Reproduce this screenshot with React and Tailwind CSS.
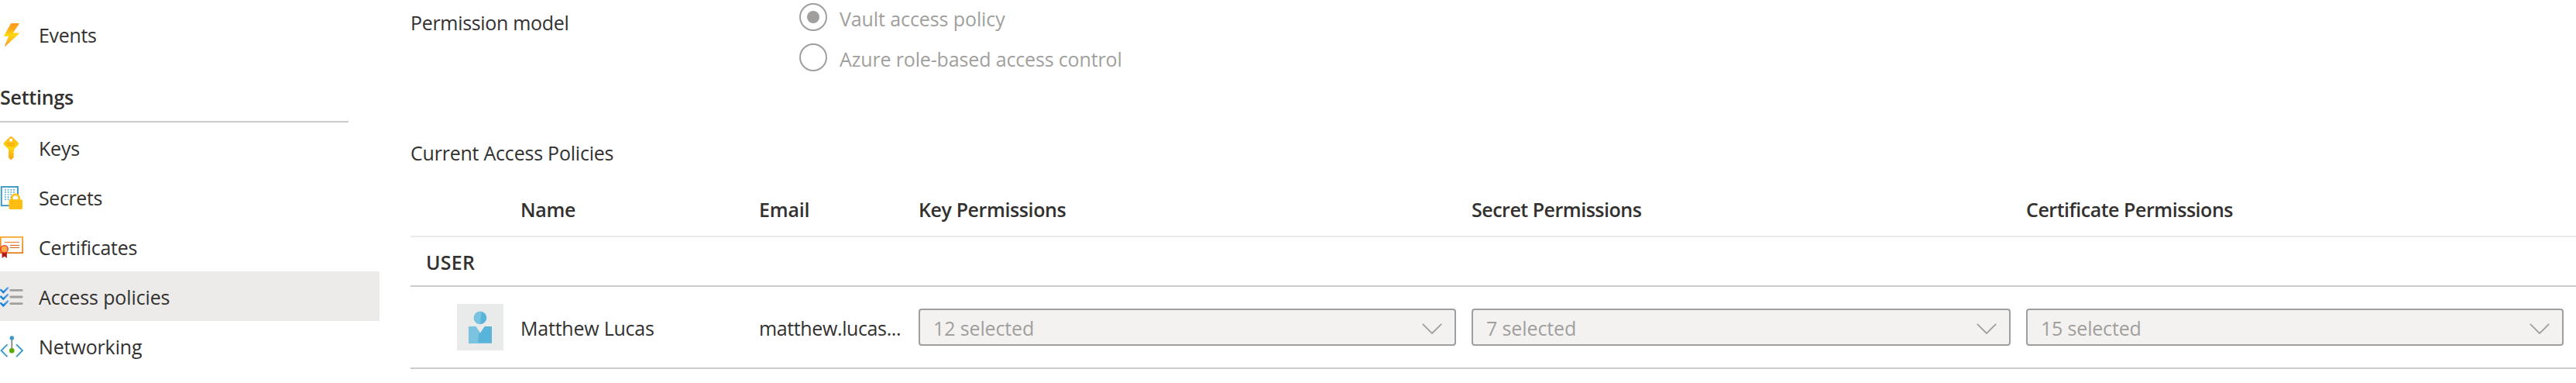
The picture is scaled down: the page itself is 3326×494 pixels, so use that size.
import React from "react";

function EventsIcon() {
  return (
    <svg viewBox="0 0 30 30" className="size-[30px] shrink-0">
      <defs>
        <linearGradient id="bolt" x1="0" y1="0" x2="0" y2="1">
          <stop offset="0" stopColor="#fe9a1d" />
          <stop offset="0.25" stopColor="#feaa1b" />
          <stop offset="0.5" stopColor="#ffd70f" />
          <stop offset="0.7" stopColor="#fec21a" />
          <stop offset="1" stopColor="#fb8a24" />
        </linearGradient>
      </defs>
      <path d="M15 0H24.5Q25.2 0 24.7 .7L16.8 12.6H24.3Q25.3 12.6 24.6 13.4L7 29.6Q5.7 30.4 6.2 29L11 16.8H6Q5 16.8 5.4 15.8L13.8 .7Q14.2 0 15 0Z" fill="url(#bolt)" />
    </svg>
  );
}

function KeysIcon() {
  return (
    <svg viewBox="0 0 30 30" className="size-[30px] shrink-0">
      <defs>
        <linearGradient id="key" x1="0" y1="0" x2="0" y2="1">
          <stop offset="0" stopColor="#feb318" />
          <stop offset="0.5" stopColor="#ffd70f" />
          <stop offset="1" stopColor="#fea11b" />
        </linearGradient>
      </defs>
      <path
        d="M12.4 .8Q14.2 -.8 16 .8L23.2 7.8Q24.8 9.5 23.2 11.2L18 16.6V19.5L16.8 20.8L18 22V23.4L17 24.5L18 25.6V26.6L15.6 29.3Q14.2 30.6 12.8 29.3L11 27.2V16.6L5.4 11.2Q3.9 9.5 5.4 7.8Z"
        fill="url(#key)"
      />
      <circle cx="14.2" cy="4.7" r="2.1" fill="#fff" />
      <path d="M9.5 9.6H19M9.5 11.8H19" stroke="#fd9a12" strokeWidth="1" />
      <path d="M13 19V28" stroke="#fdab14" strokeWidth="1" />
    </svg>
  );
}

const dotRows = [4.8, 7.9, 11, 14.1, 17.2];

function SecretsIcon() {
  return (
    <svg viewBox="0 0 30 30" className="size-[30px] shrink-0">
      <rect x="1.8" y="1" width="21.2" height="24.2" fill="#fff" stroke="#3999c6" strokeWidth="1.9" />
      {dotRows.map((y) => (
        <path key={y} d={`M6 ${y}H20`} stroke="#59b4d9" strokeWidth="1.7" strokeDasharray="1.8 1.9" />
      ))}
      <path d="M15.3 18.5V15.3A4.7 4.4 0 0 1 24.7 15.3V18.5Z" fill="#fff" stroke="#ffbd12" strokeWidth="2.6" />
      <rect x="11.5" y="17.4" width="17.5" height="12.6" rx="1.4" fill="#ffbd12" />
    </svg>
  );
}

function CertificatesIcon() {
  return (
    <svg viewBox="0 0 30 30" className="size-[30px] shrink-0">
      <defs>
        <linearGradient id="cert" x1="0" y1="0" x2="0" y2="1">
          <stop offset="0" stopColor="#f9a121" />
          <stop offset="1" stopColor="#e27a10" />
        </linearGradient>
      </defs>
      <rect x="0.8" y="1.8" width="28.4" height="20.4" fill="#fff" stroke="url(#cert)" strokeWidth="1.7" />
      <path d="M6 8.4H25" stroke="#e8741a" strokeWidth="1" />
      <path d="M13 12.4H25M13 15.4H25" stroke="#d05806" strokeWidth="1" />
      <path d="M2.6 20V29L5.7 26.6L8.8 29V20Z" fill="#b31217" />
      <circle cx="5.6" cy="17.3" r="5.4" fill="#e83b30" />
      <circle cx="5.6" cy="17.3" r="4" fill="#feae45" />
    </svg>
  );
}

const checkOffsets = [0, 8.6, 17.2];

function PoliciesIcon() {
  return (
    <svg viewBox="0 0 30 30" className="size-[30px] shrink-0">
      <defs>
        <linearGradient id="check" x1="0" y1="1" x2="1" y2="0">
          <stop offset="0" stopColor="#0078d4" />
          <stop offset="1" stopColor="#5ea0ef" />
        </linearGradient>
      </defs>
      {checkOffsets.map((dy) => (
        <g key={dy}>
          <path d={`M1.2 ${6 + dy}L4.3 ${9 + dy}L10 ${3.4 + dy}`} fill="none" stroke="url(#check)" strokeWidth="2.4" strokeLinecap="round" />
          <path d={`M13.8 ${6.4 + dy}H28.2`} stroke="#a0a0a0" strokeWidth="2.9" strokeLinecap="round" />
        </g>
      ))}
    </svg>
  );
}

function NetworkingIcon() {
  return (
    <svg viewBox="0 0 30 30" className="size-[30px] shrink-0">
      <path d="M9 12.8L1.6 20.2L9 27.6M21.6 12.8L29 20.2L21.6 27.6" fill="none" stroke="#3999c6" strokeWidth="1.9" strokeLinecap="round" />
      <path d="M15.3 4V20" stroke="#8a8a8a" strokeWidth="1.9" />
      <circle cx="15.3" cy="4" r="2.7" fill="#3999c6" />
      <circle cx="15.3" cy="20.2" r="3.3" fill="#59a900" />
    </svg>
  );
}

function Avatar() {
  return (
    <svg viewBox="0 0 60 60" className="size-[60px]">
      <rect width="60" height="60" fill="#e9ebea" />
      <circle cx="30" cy="18" r="8.3" fill="#59b4d9" />
      <path d="M31.6 9.8A8.3 8.3 0 1 0 30 26.3Z" fill="#7ac3e1" />
      <path d="M15 29H24.3L30 37.5L35.7 29H45V50.7H15Z" fill="#59b4d9" />
      <path d="M15 29H24.3L28.6 35.5L26.9 50.7H15Z" fill="#7ac3e1" />
    </svg>
  );
}

function NavItem({ icon, label, tracking, active }) {
  return (
    <a className={`flex h-16 w-[490px] items-center gap-5 pt-0.5 ${active ? "bg-[#edebe9]" : ""}`}>
      {icon}
      <span className={tracking}>{label}</span>
    </a>
  );
}

function Radio({ label, tracking, checked }) {
  return (
    <label className="flex h-9 items-center gap-4 text-[#a19f9d]">
      <span className="flex size-9 items-center justify-center rounded-full border-2 border-[#a19f9d]">
        {checked && <span className="size-4 rounded-full bg-[#a19f9d]" />}
      </span>
      <span className={`pt-[3px] ${tracking}`}>{label}</span>
    </label>
  );
}

function Select({ label, tracking, size }) {
  return (
    <div className={`flex h-12 items-center justify-between rounded-[4px] border-2 border-[#a19f9d] bg-[#f3f2f1] pr-4 pl-[17px] text-[#a19f9d] ${size}`}>
      <span className={`pt-0.5 ${tracking}`}>{label}</span>
      <svg viewBox="0 0 26 14" className="mt-1 h-3.5 w-[26px]">
        <path d="M.8 .8L13 13L25.2 .8" fill="none" stroke="#a19f9d" strokeWidth="1.8" />
      </svg>
    </div>
  );
}

export default function App() {
  return (
    <div className="flex h-[494px] w-[3326px] overflow-hidden bg-white font-['Open_Sans',sans-serif] text-[25px] leading-9 whitespace-nowrap text-[#323130]">
      <nav className="w-[530px] shrink-0 pt-3">
        <NavItem icon={<EventsIcon />} label="Events" tracking="tracking-[-0.33px]" />
        <div className="h-[82px] w-[450px] border-b-2 border-[#cccccc] pt-[31px] font-semibold tracking-[-0.23px]">Settings</div>
        <NavItem icon={<KeysIcon />} label="Keys" tracking="tracking-[-0.2px]" />
        <NavItem icon={<SecretsIcon />} label="Secrets" tracking="tracking-[-0.4px]" />
        <NavItem icon={<CertificatesIcon />} label="Certificates" tracking="tracking-[-0.3px]" />
        <NavItem icon={<PoliciesIcon />} label="Access policies" tracking="tracking-[-0.13px]" active />
        <NavItem icon={<NetworkingIcon />} label="Networking" tracking="tracking-[-0.13px]" />
      </nav>

      <main className="flex w-[2796px] flex-col">
        <section className="flex h-[179px] pt-1">
          <div className="w-[502px] pt-[7px] tracking-[-0.32px]">Permission model</div>
          <div className="flex flex-col gap-4">
            <Radio label="Vault access policy" tracking="tracking-[-0.1px]" checked />
            <Radio label="Azure role-based access control" tracking="tracking-[-0.15px]" />
          </div>
        </section>

        <h2 className="h-[57px] tracking-[-0.22px]">Current Access Policies</h2>

        <div className="grid h-[70px] grid-cols-[82px_308px_206px_714px_716px_694px] items-center border-b-2 border-[#eaeaea] pl-[60px] font-semibold">
          <span />
          <span className="tracking-[-0.31px]">Name</span>
          <span className="tracking-[-0.2px]">Email</span>
          <span className="tracking-[-0.4px]">Key Permissions</span>
          <span className="tracking-[-0.49px]">Secret Permissions</span>
          <span className="tracking-[-0.46px]">Certificate Permissions</span>
        </div>

        <div className="flex h-16 items-center border-b-2 border-[#cccccc] pt-0.5 pl-5 font-semibold tracking-[0.25px]">USER</div>

        <div className="grid h-[106px] grid-cols-[82px_308px_206px_714px_716px_694px] items-center border-b-2 border-[#cccccc] pl-[60px]">
          <Avatar />
          <span className="pt-0.5 tracking-[-0.22px]">Matthew Lucas</span>
          <span className="pt-0.5 tracking-[-0.38px]">matthew.lucas...</span>
          <Select label="12 selected" tracking="tracking-[-0.13px]" size="w-[694px]" />
          <Select label="7 selected" tracking="tracking-[-0.11px]" size="w-[696px]" />
          <Select label="15 selected" tracking="tracking-[-0.18px]" size="w-[694px]" />
        </div>
      </main>
    </div>
  );
}
